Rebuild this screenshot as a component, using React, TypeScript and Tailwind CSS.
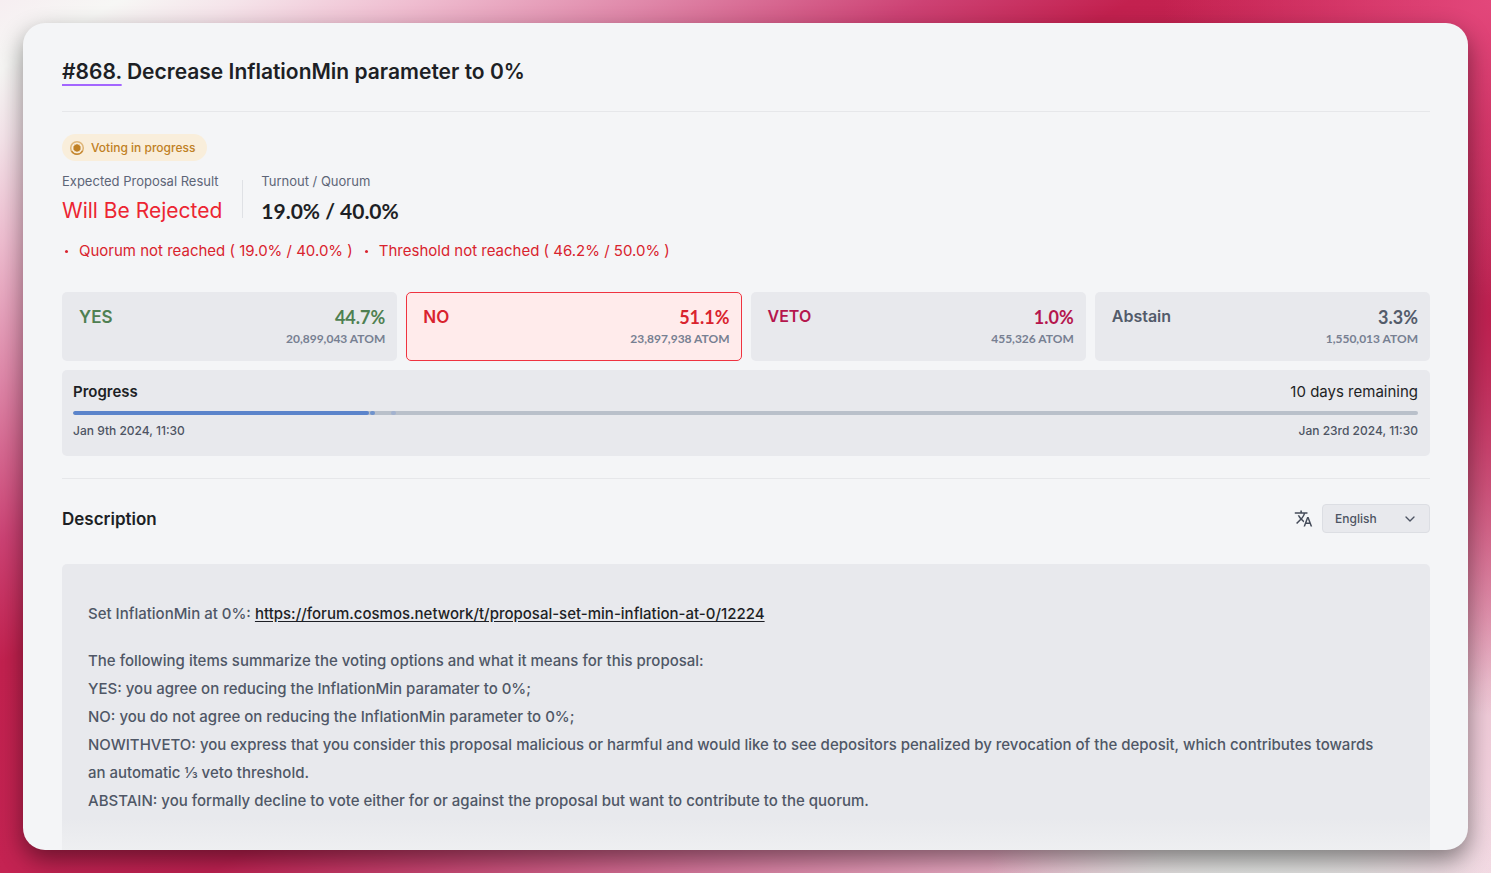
import { ChevronDown } from 'lucide-react';
import { MdTranslate } from 'react-icons/md';

const votes = [
  {
    id: 'yes',
    label: 'YES',
    percent: '44.7%',
    amount: '20,899,043 ATOM',
    box: 'border-transparent bg-[#e8e9ed]',
    color: 'text-[#4f8052]',
    size: 'text-[17px] leading-6',
  },
  {
    id: 'no',
    label: 'NO',
    percent: '51.1%',
    amount: '23,897,938 ATOM',
    box: 'border-[#ef3340] bg-[#ffebeb]',
    color: 'text-[#d9232e]',
    size: 'text-[17px] leading-6',
  },
  {
    id: 'veto',
    label: 'VETO',
    percent: '1.0%',
    amount: '455,326 ATOM',
    box: 'border-transparent bg-[#e8e9ed]',
    color: 'text-[#b5164d]',
    size: 'text-base leading-[22px]',
  },
  {
    id: 'abstain',
    label: 'Abstain',
    percent: '3.3%',
    amount: '1,550,013 ATOM',
    box: 'border-transparent bg-[#e8e9ed]',
    color: 'text-[#535b6a]',
    size: 'text-base leading-[22px]',
  },
];

const reasons = [
  'Quorum not reached ( 19.0% / 40.0% )',
  'Threshold not reached ( 46.2% / 50.0% )',
];

const elapsed = 22;

const forumUrl = 'https://forum.cosmos.network/t/proposal-set-min-inflation-at-0/12224';

function VotingIcon() {
  return (
    <svg viewBox="0 0 16 16" className="h-4 w-4" aria-hidden="true">
      <circle cx="8" cy="8" r="6.3" fill="none" stroke="#dfb679" strokeWidth="1.6" />
      <path d="M2.6 11.2a6.3 6.3 0 0 0 11-.4" fill="none" stroke="#c58731" strokeWidth="1.3" />
      <path
        d="M8 3.8l1 .9 1.400-.2.300 1.400 1.200.8-.6 1.200.6 1.300-1.200.8-.3 1.300-1.400-.1-1 .8-1-.8-1.400.1-.3-1.300-1.200-.8.6-1.300-.6-1.200 1.200-.8.300-1.400 1.400.2z"
        fill="#c08024"
      />
    </svg>
  );
}

export default function App() {
  return (
    <div className="flex h-screen flex-col bg-[radial-gradient(ellipse_22%_34%_at_100%_0%,#e3477b_0%,#e3477b00_100%),radial-gradient(ellipse_18%_30%_at_84%_104%,#dfe3e0_0%,#dfe3e0cc_40%,#dfe3e000_100%),radial-gradient(ellipse_12%_46%_at_100%_36%,#be2050_0%,#be205000_100%),linear-gradient(to_bottom_right,#f6eef1_0%,#f7f7f5_4%,#f5e4ea_8%,#efbdd0_14%,#df86a8_22%,#cd4274_31%,#c3214f_38%,#c42352_50%,#bf2151_57%,#c74470_64%,#d6769b_73%,#e6a6bf_82%,#efc9d7_89%,#f5d8e3_100%)] p-[23px] font-['Inter','Noto_Sans',sans-serif] text-[#1d1f25]">
      <main className="relative min-h-0 flex-1 overflow-hidden rounded-[22px] bg-[#f4f5f7] pt-[33px] pr-[38px] pl-[39px] shadow-[0_10px_24px_rgba(0,0,0,0.45)]">
        <header className="border-b border-[#e6e7ea] pb-[23px]">
          <h1 className="text-[21px] leading-8 font-semibold">
            <span className="underline decoration-[#a366ff] decoration-2 underline-offset-[5px]">
              #868.
            </span>{' '}
            Decrease InflationMin parameter to 0%
          </h1>
        </header>

        {/* Status */}
        <section className="pt-[22px]">
          <div className="flex h-[27px] w-fit items-center gap-1.5 rounded-full bg-[#f9eedb] pr-3 pl-[7px] text-xs font-medium text-[#c08024]">
            <VotingIcon />
            Voting in progress
          </div>

          <div className="mt-2.5 flex items-center">
            <div className="pr-5">
              <div className="text-[13px] leading-5 text-[#5d6577]">Expected Proposal Result</div>
              <div className="mt-1 text-[21px] leading-8 text-[#ec2532]">Will Be Rejected</div>
            </div>
            <div className="h-[38px] w-px bg-[#dfe1e5]" />
            <div className="pl-[18px]">
              <div className="text-[13px] leading-5 text-[#5d6577]">Turnout / Quorum</div>
              <div className="mt-1 font-['Lato',sans-serif] text-[21px] leading-8 font-bold">
                19.0% / 40.0%
              </div>
            </div>
          </div>

          <ul className="mt-3 flex gap-[9px] text-[15px] leading-6 text-[#d9232e]">
            {reasons.map((reason) => (
              <li key={reason} className="flex items-center gap-[11px]">
                <span className="ml-[3px] h-[3px] w-[3px] rounded-full bg-[#d9232e]" />
                {reason}
              </li>
            ))}
          </ul>
        </section>

        {/* Votes */}
        <section className="mt-[29px] grid grid-cols-4 gap-[9px]">
          {votes.map((vote) => (
            <div
              key={vote.id}
              className={`flex h-[69px] justify-between rounded-[5px] border pt-3 pr-[11px] pl-4 ${vote.box}`}
            >
              <div className={`font-semibold ${vote.size} ${vote.color}`}>{vote.label}</div>
              <div className="text-right font-['Lato',sans-serif] font-bold">
                <div className={`text-lg leading-6 ${vote.color}`}>{vote.percent}</div>
                <div className="text-xs leading-5 text-[#778092]">{vote.amount}</div>
              </div>
            </div>
          ))}
        </section>

        {/* Voting period */}
        <section className="mt-[9px] rounded-[5px] bg-[#e8e9ed] pt-2.5 pr-3 pb-[15px] pl-[11px]">
          <div className="flex justify-between text-[15px] leading-6">
            <h2 className="font-semibold">Progress</h2>
            <span>10 days remaining</span>
          </div>
          <div className="mt-[7px] flex h-1 overflow-hidden rounded-full bg-[#b9c0ca]">
            <div className="rounded-full bg-[#5b84cb]" style={{ width: `${elapsed}%` }} />
            <div className="ml-px w-[5px] rounded-full bg-[#7093cd]" />
            <div className="ml-4 w-[5px] rounded-full bg-[#a3b2cf]" />
          </div>
          <div className="mt-1.5 flex justify-between text-xs leading-5 font-medium text-[#4d5463]">
            <span>Jan 9th 2024, 11:30</span>
            <span>Jan 23rd 2024, 11:30</span>
          </div>
        </section>

        {/* Description */}
        <section className="mt-[22px] border-t border-[#e6e7ea] pt-[25px]">
          <div className="flex items-center justify-between">
            <h2 className="text-[17px] leading-6 font-semibold">Description</h2>
            <div className="flex items-center gap-[9px]">
              <label htmlFor="language" aria-label="Language">
                <MdTranslate className="h-[19px] w-[19px] text-[#444b59]" />
              </label>
              <div className="relative">
                <select
                  id="language"
                  className="h-[29px] w-[108px] appearance-none rounded border border-[#dcdee3] bg-[#e8e9ed] pl-3 text-xs font-medium text-[#4d5463]"
                >
                  <option>English</option>
                </select>
                <ChevronDown className="pointer-events-none absolute top-[7px] right-3 h-4 w-4 text-[#4d5463]" />
              </div>
            </div>
          </div>

          <div className="mt-[31px] rounded-[5px] bg-[#e8e9ed] pt-9 pr-[38px] pb-16 pl-[26px] text-[15px] leading-7 font-medium text-[#4f5766]">
            <p>
              Set InflationMin at 0%:{' '}
              <a href={forumUrl} className="text-[#1d1f25] underline underline-offset-2">
                {forumUrl}
              </a>
            </p>
            <p className="mt-[19px]">
              The following items summarize the voting options and what it means for this proposal:
              <br />
              YES: you agree on reducing the InflationMin paramater to 0%;
              <br />
              NO: you do not agree on reducing the InflationMin parameter to 0%;
              <br />
              NOWITHVETO: you express that you consider this proposal malicious or harmful and would
              like to see depositors penalized by revocation of the deposit, which contributes
              towards an automatic ⅓ veto threshold.
              <br />
              ABSTAIN: you formally decline to vote either for or against the proposal but want to
              contribute to the quorum.
            </p>
          </div>
        </section>

        <div className="pointer-events-none absolute right-[38px] bottom-0 left-[39px] h-8 bg-linear-to-b from-[#eeeff1]/0 to-[#eeeff1]" />
      </main>
    </div>
  );
}
